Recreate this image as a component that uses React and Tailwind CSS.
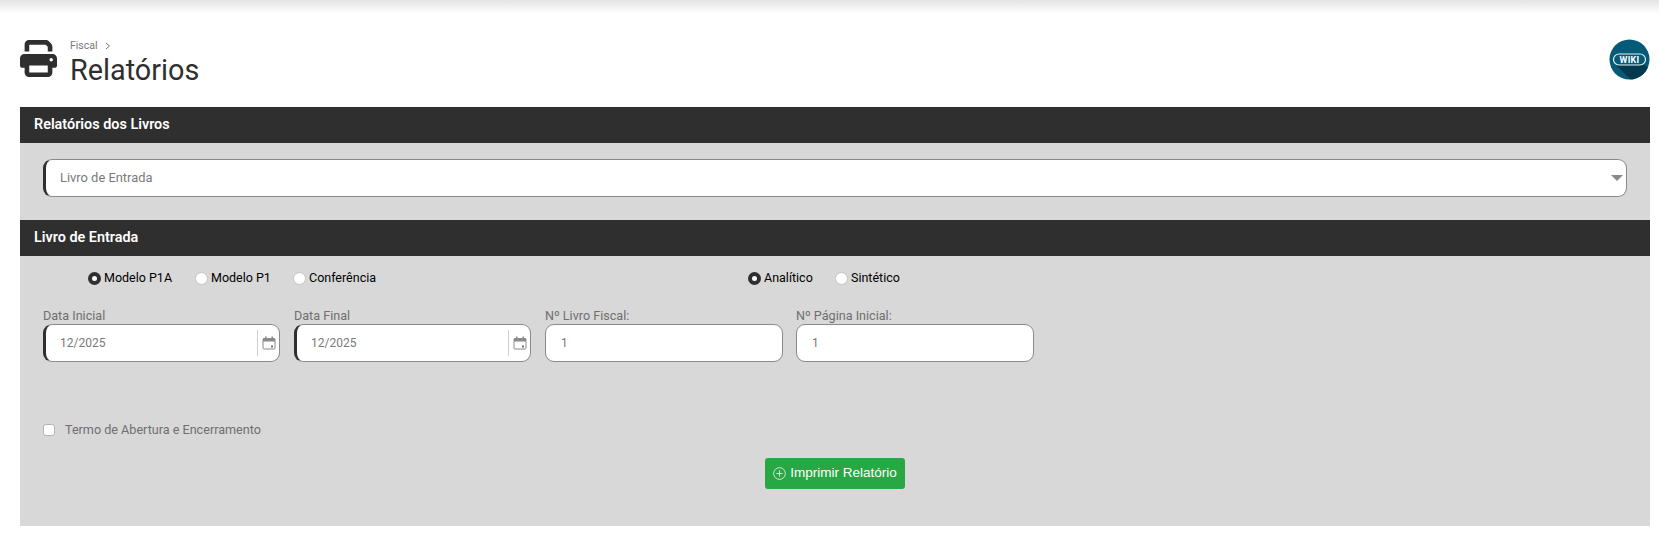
/**
 * Relatórios fiscais - tela de impressão dos livros
 */

const PrinterIcon = () => (
  <svg viewBox="0 0 512 512" className="w-[37px] h-[37px] block" fill="#2f2f2f">
    <path d="M128 0C92.7 0 64 28.7 64 64v96h64V64h226.7L384 93.3V160h64V93.3c0-17-6.7-33.3-18.7-45.3L400 18.7C388 6.7 371.700 0 354.700 0H128zM384 352v96H128v-96h256zm64 32h32c17.700 0 32-14.300 32-32V256c0-35.300-28.700-64-64-64H64c-35.300 0-64 28.700-64 64v96c0 17.700 14.300 32 32 32h32v64c0 35.300 28.700 64 64 64h256c35.300 0 64-28.700 64-64v-64zm-16-136a24 24 0 1 1 0 48 24 24 0 1 1 0-48z" />
  </svg>
);

const WikiBadge = () => (
  <svg viewBox="0 0 41 41" className="w-[41px] h-[41px] block">
    <defs>
      <clipPath id="wiki-circle">
        <circle cx="20.500" cy="20.500" r="20" />
      </clipPath>
    </defs>
    <circle cx="20.500" cy="20.500" r="20" fill="#055a75" />
    <path d="M7 26 L36 26 L56 46 L27 46 Z" fill="#04394f" clipPath="url(#wiki-circle)" />
    <rect x="4.500" y="15" width="32" height="11" rx="5.500" fill="#055a75" stroke="#e6eef1" strokeWidth="1.200" />
    <text x="20.500" y="23.700" textAnchor="middle" fontSize="9" fontWeight="700" letterSpacing="0.300" fill="#ffffff" fontFamily="Roboto, sans-serif">
      WIKI
    </text>
  </svg>
);

const CalendarIcon = () => (
  <svg viewBox="0 0 14 14" className="w-[14px] h-[14px] block" fill="none">
    <rect x="1" y="2.500" width="12" height="10.500" rx="1" stroke="#8a8a8a" strokeWidth="1" />
    <rect x="1" y="2.500" width="12" height="3" fill="#8a8a8a" />
    <rect x="3" y="0.500" width="1.500" height="3" fill="#8a8a8a" />
    <rect x="9.500" y="0.500" width="1.500" height="3" fill="#8a8a8a" />
    <rect x="9" y="9.500" width="2" height="2" fill="#6f6f6f" />
  </svg>
);

const SectionHeader = ({ children }) => (
  <div className="h-9 bg-[#2f2f2f] flex items-center pl-[14px] text-white text-[14.400px] font-semibold">
    {children}
  </div>
);

const Radio = ({ label, checked, className }) => (
  <label className={`flex items-center text-black text-[12.500px] ${className}`}>
    {checked ? (
      <span className="w-[13px] h-[13px] rounded-full bg-white border-[4px] border-[#2f2f2f]" />
    ) : (
      <span className="w-[13px] h-[13px] rounded-full bg-white border border-[#c4c4c4]" />
    )}
    <span className="ml-[3px]">{label}</span>
  </label>
);

const DateField = ({ label, className }) => (
  <div className={`flex flex-col ${className}`}>
    <span className="text-[12.600px] leading-[16px] text-[#6f6f6f]">{label}</span>
    <div className="h-[38px] bg-white border border-[#8a8a8a] border-l-[3px] border-l-[#2f2f2f] rounded-[9px] flex items-center">
      <span className="flex-1 pl-[14px] text-xs text-[#7a7a7a]">12/2025</span>
      <span className="h-[26px] border-l border-[#cfcfcf] pl-[4px] pr-[3px] flex items-center">
        <CalendarIcon />
      </span>
    </div>
  </div>
);

const NumberField = ({ label, className }) => (
  <div className={`flex flex-col ${className}`}>
    <span className="text-[12.600px] leading-[16px] text-[#6f6f6f]">{label}</span>
    <div className="h-[38px] bg-white border border-[#8a8a8a] rounded-[9px] flex items-center pl-[15px] text-xs text-[#7a7a7a]">
      1
    </div>
  </div>
);

export default function App() {
  return (
    <div className="w-[1659px] h-[538px] bg-white overflow-hidden font-['Roboto',sans-serif]">
      {/* Sombra da barra superior */}
      <div className="h-[14px] bg-gradient-to-b from-[#e4e4e4] to-white" />

      {/* Cabeçalho */}
      <div className="h-[93px] pl-5 pr-[9px] flex items-start justify-between">
        <div className="flex items-start pt-[26px]">
          <PrinterIcon />
          <div className="ml-[13px]">
            <div className="text-[10.500px] leading-3 text-[#777777] flex items-center">
              Fiscal
              <svg viewBox="0 0 8 8" className="w-2 h-2 ml-[6px]" fill="none" stroke="#777777" strokeWidth="1">
                <path d="M2 1l3.500 3L2 7" />
              </svg>
            </div>
            <h1 className="text-[28.800px] leading-[36px] text-[#2f2f2f] font-normal">Relatórios</h1>
          </div>
        </div>
        <div className="pt-[25px]">
          <WikiBadge />
        </div>
      </div>

      <div className="w-[1630px] ml-5">
        <SectionHeader>Relatórios dos Livros</SectionHeader>
        <div className="bg-[#d8d8d8] h-[77px] pt-4 px-[23px]">
          <div className="h-[38px] bg-white border border-[#8a8a8a] border-l-[3px] border-l-[#2f2f2f] rounded-[9px] flex items-center justify-between pl-[14px] pr-[3px] pb-[1px] text-[12.900px] text-[#7a7a7a]">
            Livro de Entrada
            <span className="w-0 h-0 border-x-[6px] border-x-transparent border-t-[6px] border-t-[#8a8a8a]" />
          </div>
        </div>

        <SectionHeader>Livro de Entrada</SectionHeader>
        <div className="bg-[#d8d8d8] h-[270px] pl-[23px] pt-[14px]">
          {/* Modelo e tipo */}
          <div className="flex h-[16px] pl-[45px]">
            <Radio label="Modelo P1A" checked className="w-[107px]" />
            <Radio label="Modelo P1" className="w-[98px]" />
            <Radio label="Conferência" className="w-[455px]" />
            <Radio label="Analítico" checked className="w-[87px]" />
            <Radio label="Sintético" />
          </div>

          {/* Campos */}
          <div className="flex mt-[22px] gap-[14px]">
            <DateField label="Data Inicial" className="w-[237px]" />
            <DateField label="Data Final" className="w-[237px]" />
            <NumberField label="Nº Livro Fiscal:" className="w-[238px]" />
            <NumberField label="Nº Página Inicial:" className="w-[238px] -ml-px" />
          </div>

          {/* Termo */}
          <label className="flex items-center mt-[59px] text-[12.600px] text-[#6f6f6f]">
            <span className="w-[12px] h-[12px] bg-white border border-[#b5b5b5] rounded-[3px]" />
            <span className="ml-[10px]">Termo de Abertura e Encerramento</span>
          </label>

          {/* Ação */}
          <div className="flex justify-center mt-[18px] pr-[23px]">
            <button className="h-[31px] w-[140px] bg-[#28a745] rounded-[3px] text-white text-[13.500px] flex items-center justify-center font-['Liberation_Sans',sans-serif]">
              <svg viewBox="0 0 14 14" className="w-[13px] h-[13px] mr-[4px] mt-[1px]" fill="none" stroke="#ffffff" strokeWidth="0.800">
                <circle cx="7" cy="7" r="6.300" />
                <path d="M7 3.500v7M3.500 7h7" />
              </svg>
              Imprimir Relatório
            </button>
          </div>
        </div>
      </div>
    </div>
  );
}
